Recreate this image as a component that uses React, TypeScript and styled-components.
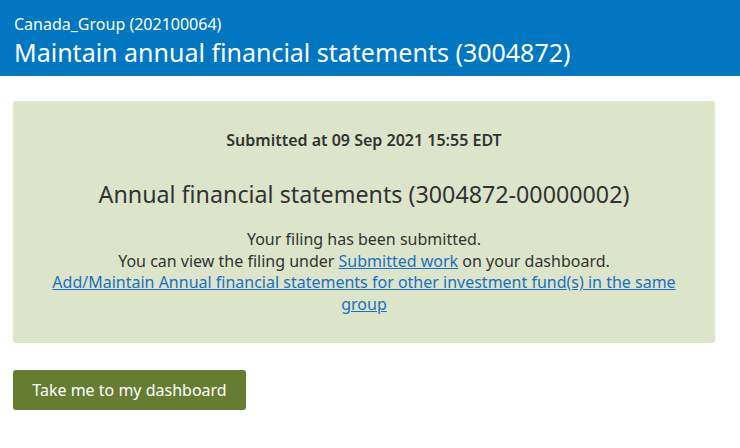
import React from "react";
import styled, { createGlobalStyle } from "styled-components";

const Global = createGlobalStyle`
  html, body { margin: 0; padding: 0; background: #fff; }
  body { font-family: "Noto Sans", "Open Sans", sans-serif; color: #333; }
`;

const Header = styled.header`
  background: #0077c0;
  color: #fff;
  padding: 13px 14px 0;
  height: 76px;
  box-sizing: border-box;
`;

const Org = styled.div`
  font-size: 16px;
  line-height: 22px;
`;

const Title = styled.h1`
  margin: 0;
  font-size: 25px;
  font-weight: 400;
  line-height: 34px;
`;

const Main = styled.main`
  padding: 25px 25px 0 13px;
`;

const Panel = styled.section`
  background: #dce5c9;
  border-radius: 3px;
  width: 702px;
  height: 242px;
  box-sizing: border-box;
  padding: 28px 24px 0;
  text-align: center;
`;

const Stamp = styled.div`
  font-size: 16px;
  font-weight: 600;
  line-height: 22px;
`;

const Heading = styled.h2`
  margin: 27px 0 0;
  font-size: 23.25px;
  font-weight: 400;
  line-height: 32px;
`;

const Body = styled.div`
  margin-top: 19px;
  font-size: 16px;
  line-height: 21.7px;
`;

const Link = styled.a`
  color: #1d6fc0;
  text-decoration: underline;
`;

const Button = styled.button`
  margin-top: 27px;
  background: #667d31;
  color: #fff;
  border: none;
  border-radius: 3px;
  height: 40px;
  width: 233px;
  font-family: inherit;
  font-size: 16px;
  cursor: pointer;
`;

export default function App() {
  return (
    <>
      <Global />
      <Header>
        <Org>Canada_Group (202100064)</Org>
        <Title>Maintain annual financial statements (3004872)</Title>
      </Header>
      <Main>
        <Panel>
          <Stamp>Submitted at 09 Sep 2021 15:55 EDT</Stamp>
          <Heading>Annual financial statements (3004872-00000002)</Heading>
          <Body>
            <div>Your filing has been submitted.</div>
            <div>
              You can view the filing under <Link href="#">Submitted work</Link> on your dashboard.
            </div>
            <div>
              <Link href="#">
                Add/Maintain Annual financial statements for other investment fund(s) in the same group
              </Link>
            </div>
          </Body>
        </Panel>
        <Button>Take me to my dashboard</Button>
      </Main>
    </>
  );
}
